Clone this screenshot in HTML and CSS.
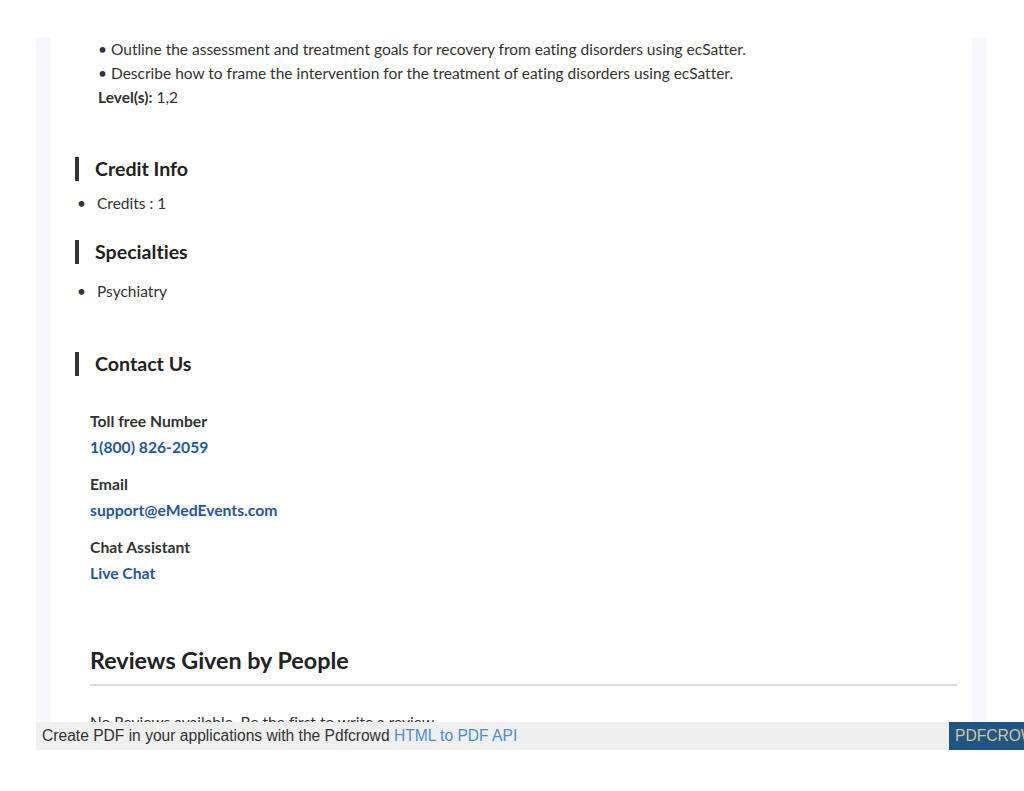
FILE: index.html
```html
<!DOCTYPE html>
<html>
  <head>
    <title>Course Details</title>
    <link rel="stylesheet" href="styles.css">
  </head>
  <body>
    <div class="sheet">
      <div class="sheet-inner">
        <div class="objectives">
          <div>&bull; Outline the assessment and treatment goals for recovery from eating disorders using ecSatter.</div>
          <div>&bull; Describe how to frame the intervention for the treatment of eating disorders using ecSatter.</div>
          <div><b>Level(s):</b> 1,2</div>
        </div>

        <h3 class="section-title credit-title">Credit Info</h3>
        <ul class="info-list">
          <li>Credits : 1</li>
        </ul>

        <h3 class="section-title specialty-title">Specialties</h3>
        <ul class="info-list specialty-list">
          <li>Psychiatry</li>
        </ul>

        <h3 class="section-title contact-title">Contact Us</h3>
        <div class="contact">
          <div class="contact-item">
            <div class="contact-label">Toll free Number</div>
            <a href="#">1(800) 826-2059</a>
          </div>
          <div class="contact-item">
            <div class="contact-label">Email</div>
            <a href="#">support@eMedEvents.com</a>
          </div>
          <div class="contact-item">
            <div class="contact-label">Chat Assistant</div>
            <a href="#">Live Chat</a>
          </div>
        </div>

        <div class="reviews">
          <h2>Reviews Given by People</h2>
          <p>No Reviews available. Be the first to write a review.</p>
        </div>
      </div>
    </div>

    <div class="pdf-bar">
      <div class="pdf-text">Create PDF in your applications with the Pdfcrowd <a href="#">HTML to PDF API</a></div>
      <div class="pdf-brand">PDFCROWD</div>
    </div>
  </body>
</html>
```

FILE: styles.css
```css
html,
body {
  overflow-x: hidden;
}

body {
  margin: 0;
  padding-top: 37px;
  background: #fff;
  font-family: Lato, "Noto Sans", sans-serif;
  font-variant-ligatures: no-common-ligatures;
  color: #333;
}

.sheet {
  width: 921px;
  height: 685px;
  margin-left: 36px;
  padding: 0 15px;
  background: #f7f7fe;
  overflow: hidden;
}

.sheet-inner {
  height: 100%;
  background: #fff;
  padding: 0 15px 0 24px;
  box-sizing: border-box;
}

.objectives {
  margin-left: 23px;
  font-size: 15.5px;
  line-height: 24px;
}

.objectives b {
  font-weight: 700;
}

.section-title {
  margin: 0;
  padding-left: 16px;
  border-left: 4px solid #333;
  font-size: 19.6px;
  font-weight: 700;
  line-height: 24px;
  color: #222;
}

.credit-title {
  margin-top: 48px;
}

.specialty-title {
  margin-top: 25px;
}

.contact-title {
  margin-top: 49px;
}

.info-list {
  margin: 10px 0 0;
  padding: 0;
  list-style: none;
  font-size: 15.5px;
  line-height: 24px;
}

.info-list li {
  display: flex;
}

.info-list li::before {
  content: "\2022";
  width: 22px;
  padding-left: 2px;
  box-sizing: border-box;
}

.specialty-list {
  margin-top: 15px;
}

.contact {
  margin: 33px 0 0 15px;
  display: flex;
  flex-direction: column;
  gap: 13px;
}

.contact-item {
  font-size: 15.7px;
  line-height: 24px;
  font-weight: 700;
}

.contact-label {
  margin-bottom: 2px;
}

.contact-item a {
  color: #1d58a5;
  text-decoration: none;
}

.reviews {
  margin: 60px 0 0 15px;
}

.reviews h2 {
  margin: 0;
  padding-bottom: 9px;
  border-bottom: 2px solid #ddd;
  font-size: 23.3px;
  font-weight: 700;
  line-height: 30px;
  color: #222;
}

.reviews p {
  margin: 24px 0 0;
  font-size: 15.5px;
  line-height: 24px;
}

.pdf-bar {
  display: flex;
  width: 988px;
  height: 28px;
  margin-left: 36px;
  background: #efefef;
  font-family: "Liberation Sans", Arial, sans-serif;
  font-size: 15.6px;
  line-height: 28px;
  overflow: hidden;
  white-space: nowrap;
}

.pdf-text {
  width: 913px;
  padding-left: 6px;
  box-sizing: border-box;
  flex-shrink: 0;
  color: #333;
}

.pdf-text a {
  color: #4a8fcd;
  text-decoration: none;
}

.pdf-brand {
  padding-left: 6px;
  width: 100px;
  flex-shrink: 0;
  background: #1f5688;
  color: #d7c594;
}
```
